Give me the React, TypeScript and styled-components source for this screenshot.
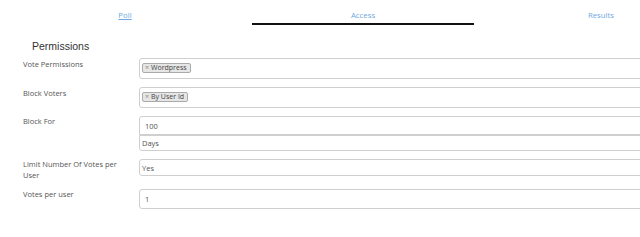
import styled, { createGlobalStyle } from "styled-components";

const GlobalStyle = createGlobalStyle`
  html, body {
    margin: 0;
    padding: 0;
    background: #ffffff;
    overflow: hidden;
  }
  body {
    font-family: "Open Sans", "Noto Sans", sans-serif;
  }
`;

const Page = styled.div`
  width: 714px;
  margin-left: 6px;
`;

const TabBar = styled.div`
  display: flex;
  padding-top: 8px;
`;

const Tab = styled.a<{ $active?: boolean; $underline?: boolean }>`
  flex: 1;
  margin: 0 8px;
  height: 15px;
  text-align: center;
  font-size: 7.8px;
  line-height: 15px;
  color: #6fa8e0;
  text-decoration: ${({ $underline }) => ($underline ? "underline" : "none")};
  border-bottom: 2px solid ${({ $active }) => ($active ? "#111" : "transparent")};
  cursor: pointer;
`;

const Heading = styled.h3`
  margin: 15px 0 5px 26px;
  font-family: "Liberation Sans", Arial, sans-serif;
  font-size: 10.5px;
  font-weight: normal;
  color: #333;
  line-height: 13px;
`;

const Form = styled.div`
  display: flex;
  flex-direction: column;
  gap: 8px;
  padding-left: 17px;
`;

const Row = styled.div`
  display: grid;
  grid-template-columns: 116px 1fr;
  align-items: start;
`;

const Label = styled.label<{ $offset?: number }>`
  padding-right: 14px;
  padding-top: ${({ $offset }) => $offset ?? 0}px;
  font-size: 7.5px;
  line-height: 11px;
  color: #555;
`;

const Stack = styled.div`
  display: flex;
  flex-direction: column;
`;

const MultiSelect = styled.div`
  height: 21px;
  box-sizing: border-box;
  border: 1px solid #cfcfcf;
  border-radius: 3px;
  padding: 4px 2px;
  display: flex;
  align-items: flex-start;
`;

const Chip = styled.span`
  display: inline-flex;
  align-items: center;
  height: 10px;
  box-sizing: border-box;
  padding: 0 3px 0 2px;
  background: #e6e6e6;
  border: 1px solid #aaaaaa;
  border-radius: 2px;
  font-size: 7px;
  line-height: 8px;
  color: #444;
`;

const ChipX = styled.span`
  color: #888;
  margin-right: 2px;
  font-size: 7px;
`;

const Field = styled.div<{ $height: number; $pad: number; $joined?: "top" | "bottom" }>`
  height: ${({ $height }) => $height}px;
  box-sizing: border-box;
  border: 1px solid #cfcfcf;
  border-radius: ${({ $joined }) =>
    $joined === "top" ? "3px 3px 0 0" : $joined === "bottom" ? "0 0 3px 3px" : "3px"};
  padding-left: ${({ $pad }) => $pad}px;
  display: flex;
  align-items: center;
  font-size: 7.5px;
  color: #555;
`;

export default function App() {
  return (
    <Page>
      <GlobalStyle />
      <TabBar>
        <Tab $underline>Poll</Tab>
        <Tab $active>Access</Tab>
        <Tab>Results</Tab>
      </TabBar>
      <Heading>Permissions</Heading>
      <Form>
        <Row>
          <Label $offset={1}>Vote Permissions</Label>
          <MultiSelect>
            <Chip>
              <ChipX>×</ChipX>Wordpress
            </Chip>
          </MultiSelect>
        </Row>
        <Row>
          <Label $offset={1}>Block Voters</Label>
          <MultiSelect>
            <Chip>
              <ChipX>×</ChipX>By User Id
            </Chip>
          </MultiSelect>
        </Row>
        <Row>
          <Label>Block For</Label>
          <Stack>
            <Field $height={19} $pad={5} $joined="top">100</Field>
            <Field $height={16} $pad={2} $joined="bottom">Days</Field>
          </Stack>
        </Row>
        <Row>
          <Label>Limit Number Of Votes per User</Label>
          <Field $height={17} $pad={2}>Yes</Field>
        </Row>
        <Row>
          <Label>Votes per user</Label>
          <Field $height={20} $pad={5}>1</Field>
        </Row>
      </Form>
    </Page>
  );
}
